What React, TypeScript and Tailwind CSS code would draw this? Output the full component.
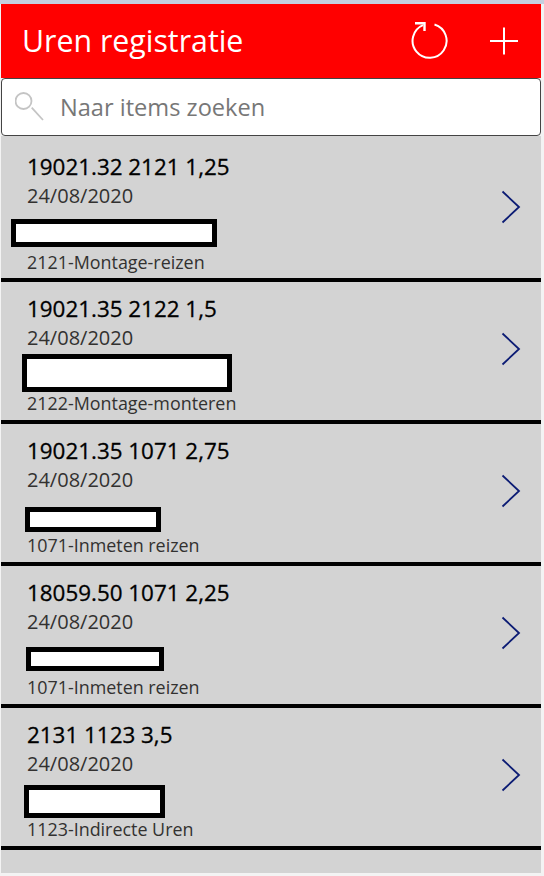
import React from "react";

const rows = [
  { title: "19021.32 2121 1,25", sub: "2121-Montage-reizen", gap: "mt-[41px]", box: "left-[10px] top-[79px] w-[206px] h-[28px]" },
  { title: "19021.35 2122 1,5", sub: "2122-Montage-monteren", gap: "mt-[40.4px]", box: "left-[21px] top-[72px] w-[210px] h-[38px]" },
  { title: "19021.35 1071 2,75", sub: "1071-Inmeten reizen", gap: "mt-[40.4px]", box: "left-[24px] top-[83px] w-[136px] h-[25px]" },
  { title: "18059.50 1071 2,25", sub: "1071-Inmeten reizen", gap: "mt-[40.4px]", box: "left-[25px] top-[81px] w-[138px] h-[24px]" },
  { title: "2131 1123 3,5", sub: "1123-Indirecte Uren", gap: "mt-[40.4px]", box: "left-[23px] top-[77px] w-[141px] h-[33px]" },
];

const date = "24/08/2020";

function Row({ title, sub, gap, box }: { title: string; sub: string; gap: string; box: string }) {
  return (
    <div className="relative h-[142px] border-b-[4px] border-black flex items-start justify-between">
      <div className="pl-[26px] pt-[11.6px] flex flex-col">
        <div className="text-[22.4px] leading-[30px] [-webkit-text-stroke:0.3px_black] text-black">{title}</div>
        <div className="text-[20px] leading-[26px] mt-[1.4px] text-[#323130]">{date}</div>
        <div className={`text-[17.9px] leading-[24px] ${gap} text-[#323130]`}>{sub}</div>
      </div>
      <div className={`absolute ${box} bg-white border-[5px] border-black`} />
      <svg className="mr-[20px] mt-[50px]" width="20" height="34" viewBox="0 0 20 34" fill="none">
        <path d="M1.5 1.5 L18 17 L1.5 32.5" stroke="#0c1c74" strokeWidth="1.8" />
      </svg>
    </div>
  );
}

export default function App() {
  return (
    <div className="h-[876px] w-[544px] bg-[#f3f3f3] overflow-hidden font-['Open_Sans',sans-serif]">
      <div className="h-[4px] bg-[#c5d0e0]" />
      <div className="w-[540px] ml-[1px]">
        <div className="h-[74px] bg-[#ff0000] flex items-center justify-between pl-[21px] pr-[22px]">
          <span className="text-[30.3px] leading-[40px] text-white">Uren registratie</span>
          <div className="flex items-center gap-[41px]">
            <svg width="38" height="38" viewBox="0 0 38 38" fill="none">
              <path d="M24.5 2.5 A17 17 0 1 1 13 3.1" stroke="white" strokeWidth="2" />
              <path d="M5 1.3 H14.5 V9" stroke="white" strokeWidth="2.4" />
            </svg>
            <svg width="30" height="30" viewBox="0 0 30 30" fill="none">
              <path d="M15 1.5 V28.5 M1 15 H29" stroke="white" strokeWidth="2" />
            </svg>
          </div>
        </div>
        <div className="h-[58px] bg-white border border-[#444] rounded-[4px] flex items-center pl-[13px]">
          <svg width="32" height="32" viewBox="0 0 32 32" fill="none">
            <circle cx="8.5" cy="10" r="8" stroke="#c4c4c4" strokeWidth="1.8" />
            <path d="M16.7 16.7 L28 29" stroke="#c4c4c4" strokeWidth="1.8" />
          </svg>
          <span className="ml-[13px] text-[23.6px] leading-[32px] text-[#777]">Naar items zoeken</span>
        </div>
        <div className="h-[737px] pt-[4px] bg-[#d3d3d3]">
          {rows.map((r) => (
            <Row key={r.title} {...r} />
          ))}
        </div>
      </div>
    </div>
  );
}
